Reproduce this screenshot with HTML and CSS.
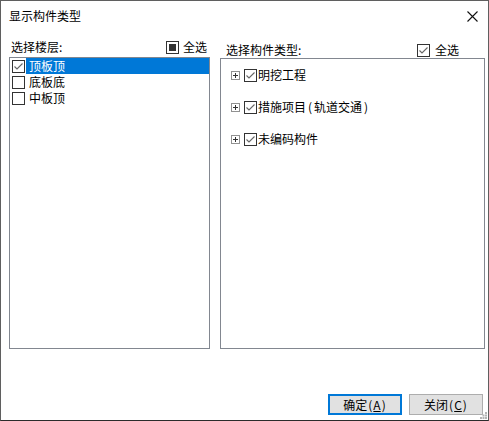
FILE: index.html
```html
<!DOCTYPE html>
<html lang="zh-CN">
<head>
<meta charset="utf-8">
<link rel="stylesheet" href="styles.css">
</head>
<body>
<div class="window">
  <div class="titlebar">
    <span class="title">显示构件类型</span>
    <svg class="close" width="11" height="11" viewBox="0 0 11 11"><path d="M0.5 0.5 L10.5 10.5 M10.5 0.5 L0.5 10.5" stroke="#111" stroke-width="1.1" fill="none"/></svg>
  </div>
  <div class="main">
    <div class="col col-left">
      <div class="header">
        <span class="label">选择楼层:</span>
        <span class="all">
          <svg class="cb" width="13" height="13" viewBox="0 0 13 13"><rect x="0.5" y="0.5" width="12" height="12" fill="#fff" stroke="#333"/><rect x="3" y="3" width="7" height="7" fill="#333"/></svg>
          <span>全选</span>
        </span>
      </div>
      <div class="box">
        <div class="row">
          <svg class="cb" width="13" height="13" viewBox="0 0 13 13"><rect x="0.5" y="0.5" width="12" height="12" fill="#fff" stroke="#333"/><path d="M2.5 6.5 L5 9 L10.5 3.5" stroke="#666" stroke-width="1.1" fill="none"/></svg>
          <span class="item selected">顶板顶</span>
        </div>
        <div class="row">
          <svg class="cb" width="13" height="13" viewBox="0 0 13 13"><rect x="0.5" y="0.5" width="12" height="12" fill="#fff" stroke="#333"/></svg>
          <span class="item">底板底</span>
        </div>
        <div class="row">
          <svg class="cb" width="13" height="13" viewBox="0 0 13 13"><rect x="0.5" y="0.5" width="12" height="12" fill="#fff" stroke="#333"/></svg>
          <span class="item">中板顶</span>
        </div>
      </div>
    </div>
    <div class="col col-right">
      <div class="header">
        <span class="label">选择构件类型:</span>
        <span class="all">
          <svg class="cb" width="13" height="13" viewBox="0 0 13 13"><rect x="0.5" y="0.5" width="12" height="12" fill="#fff" stroke="#333"/><path d="M2.5 6.5 L5 9 L10.5 3.5" stroke="#666" stroke-width="1.1" fill="none"/></svg>
          <span>全选</span>
        </span>
      </div>
      <div class="box tree">
        <div class="node">
          <svg class="plus" width="9" height="9" viewBox="0 0 9 9"><rect x="0.5" y="0.5" width="8" height="8" fill="#fff" stroke="#919191"/><path d="M2 4.5 H7 M4.5 2 V7" stroke="#333" stroke-width="1"/></svg>
          <svg class="cb" width="13" height="13" viewBox="0 0 13 13"><rect x="0.5" y="0.5" width="12" height="12" fill="#fff" stroke="#333"/><path d="M2.5 6.5 L5 9 L10.5 3.5" stroke="#666" stroke-width="1.1" fill="none"/></svg>
          <span class="node-text">明挖工程</span>
        </div>
        <div class="node">
          <svg class="plus" width="9" height="9" viewBox="0 0 9 9"><rect x="0.5" y="0.5" width="8" height="8" fill="#fff" stroke="#919191"/><path d="M2 4.5 H7 M4.5 2 V7" stroke="#333" stroke-width="1"/></svg>
          <svg class="cb" width="13" height="13" viewBox="0 0 13 13"><rect x="0.5" y="0.5" width="12" height="12" fill="#fff" stroke="#333"/><path d="M2.5 6.5 L5 9 L10.5 3.5" stroke="#666" stroke-width="1.1" fill="none"/></svg>
          <span class="node-text">措施项目<span class="paren">(</span>轨道交通<span class="paren">)</span></span>
        </div>
        <div class="node">
          <svg class="plus" width="9" height="9" viewBox="0 0 9 9"><rect x="0.5" y="0.5" width="8" height="8" fill="#fff" stroke="#919191"/><path d="M2 4.5 H7 M4.5 2 V7" stroke="#333" stroke-width="1"/></svg>
          <svg class="cb" width="13" height="13" viewBox="0 0 13 13"><rect x="0.5" y="0.5" width="12" height="12" fill="#fff" stroke="#333"/><path d="M2.5 6.5 L5 9 L10.5 3.5" stroke="#666" stroke-width="1.1" fill="none"/></svg>
          <span class="node-text">未编码构件</span>
        </div>
      </div>
    </div>
  </div>
  <div class="footer">
    <button class="btn btn-default">确定<span class="bparen">(</span><u>A</u><span class="bparen">)</span></button>
    <button class="btn">关闭<span class="bparen">(</span><u>C</u><span class="bparen">)</span></button>
  </div>
  <svg class="grip" width="7" height="7" viewBox="0 0 7 7"><g fill="#b4b4b4"><rect x="5" y="0" width="2" height="2"/><rect x="2.5" y="2.5" width="2" height="2"/><rect x="5" y="2.5" width="2" height="2"/><rect x="0" y="5" width="2" height="2"/><rect x="2.5" y="5" width="2" height="2"/><rect x="5" y="5" width="2" height="2"/></g></svg>
</div>
</body>
</html>
```

FILE: styles.css
```css
* { box-sizing: border-box; }
html, body { margin: 0; padding: 0; background: #fff; }
body {
  width: 489px;
  height: 421px;
  overflow: hidden;
  font-family: "Noto Sans CJK SC", "Microsoft YaHei", sans-serif;
  font-size: 12px;
  color: #000;
}
.window {
  position: relative;
  width: 489px;
  height: 421px;
  border: 1px solid #5f5f5f;
  border-bottom-color: #2b2b2b;
  background: #fff;
  display: flex;
  flex-direction: column;
}
.titlebar {
  height: 30px;
  display: flex;
  align-items: center;
  justify-content: space-between;
  padding: 0 10px 0 8px;
}
.title { font-size: 12px; line-height: 16px; }
.close { display: block; }
.main {
  display: flex;
  gap: 10px;
  padding: 0 3px 0 8px;
}
.col { display: flex; flex-direction: column; }
.col-left { width: 201px; }
.col-right { width: 265px; }
.header {
  height: 26px;
  display: flex;
  align-items: flex-end;
  justify-content: space-between;
  padding: 0 2px 2px 2px;
  line-height: 16px;
}
.col-left .header { padding-right: 3px; }
.col-left .all { gap: 4px; }
.col-right .header { height: 27px; padding: 0 26px 0 6px; }
.all { display: flex; align-items: center; gap: 5px; }
.cb { display: block; flex: none; }
.box {
  border: 1px solid #828790;
  background: #fff;
  height: 292px;
}
.col-right .box { height: 291px; }
.row {
  display: flex;
  align-items: center;
  height: 16px;
  padding-left: 2px;
}
.row .cb { margin-right: 1px; }
.item {
  flex: 1;
  height: 16px;
  line-height: 16px;
  padding-left: 3px;
}
.item.selected { background: #0078d7; color: #fff; }
.tree { padding-left: 10px; }
.node {
  display: flex;
  align-items: center;
  height: 32px;
}
.plus { display: block; flex: none; margin-right: 4px; }
.node-text { line-height: 16px; margin-left: 1px; }
.paren { padding: 0 2px; }
.bparen { padding: 0 1px; }
.footer {
  margin-top: auto;
  display: flex;
  justify-content: flex-end;
  gap: 7px;
  padding: 0 5px 5px 0;
}
.btn {
  width: 74px;
  height: 21px;
  background: #e1e1e1;
  border: 1px solid #adadad;
  font-family: inherit;
  font-size: 12px;
  line-height: 16px;
  padding: 0;
  color: #000;
}
.btn-default { border: 2px solid #0078d7; }
.grip {
  position: absolute;
  right: 1px;
  bottom: 1px;
}
```
